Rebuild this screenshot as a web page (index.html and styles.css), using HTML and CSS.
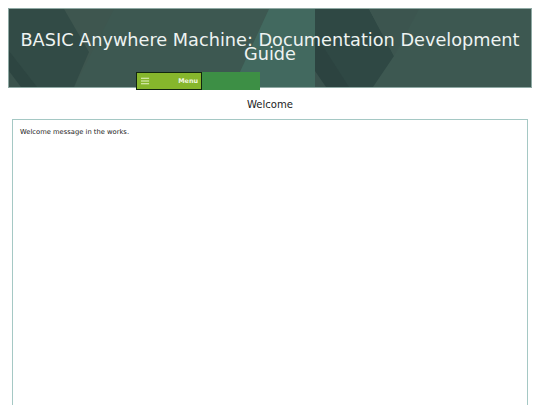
FILE: index.html
```html
<!DOCTYPE html>
<html lang="en">
<head>
  <meta charset="UTF-8">
  <title>BASIC Anywhere Machine: Documentation Development Guide</title>
  <link rel="stylesheet" href="styles.css">
</head>
<body>
  <!-- Banner -->
  <header class="banner">
    <svg class="banner-bg" viewBox="0 0 522 78" preserveAspectRatio="none" aria-hidden="true">
      <rect width="522" height="78" fill="#3d5851"/>
      <polygon points="0,0 105,0 65,78 0,78" fill="#3e564f"/>
      <polygon points="0,0 55,0 80,43 65,78 0,78" fill="#324b46"/>
      <polygon points="0,42 28,78 0,78" fill="#2d4541"/>
      <polygon points="0,62 12,78 0,78" fill="#3a524c"/>
      <polygon points="224,78 260,0 306,0 306,78" fill="#42695f"/>
      <polygon points="306,0 360,0 385,47 364,78 306,78" fill="#2f4844"/>
      <polygon points="360,0 410,0 385,47" fill="#3c554f"/>
      <polygon points="306,25 340,78 306,78" fill="#2c4340"/>
      <polygon points="306,62 317,78 306,78" fill="#3a524d"/>
    </svg>
    <h1 class="title">BASIC Anywhere Machine: Documentation Development Guide</h1>
    <nav class="menu-bar">
      <div class="menu-btn">
        <svg class="burger" viewBox="0 0 10 8" aria-hidden="true">
          <path d="M0 1H9M0 4H9M0 7H9" stroke="#e6f2c4" stroke-width="1.2"/>
        </svg>
        <span>Menu</span>
      </div>
    </nav>
  </header>

  <!-- Main content -->
  <h2 class="page-title">Welcome</h2>
  <main class="panel">
    <p>Welcome message in the works.</p>
  </main>
</body>
</html>
```
FILE: styles.css
```css
/* General styles */
html, body {
  height: 405px;
  overflow: hidden;
}

body {
  margin: 0;
  padding: 8px 8px 0;
  box-sizing: border-box;
  font-family: "DejaVu Sans", sans-serif;
  background-color: #fff;
  color: #222;
}

/* Banner */
.banner {
  position: relative;
  height: 80px;
  box-sizing: border-box;
  border: 1px solid #8fa9a4;
  padding-top: 24px;
}

.banner-bg {
  position: absolute;
  top: 0;
  left: 0;
  width: 100%;
  height: 100%;
}

.title {
  position: relative;
  margin: 0;
  font-size: 17.7px;
  font-weight: normal;
  line-height: 14.4px;
  text-align: center;
  color: #eef3f1;
}

.menu-bar {
  position: absolute;
  left: 127px;
  top: 63px;
  width: 124px;
  height: 18px;
  background-color: #3d8f45;
}

.menu-btn {
  display: flex;
  align-items: center;
  justify-content: space-between;
  box-sizing: border-box;
  width: 66px;
  height: 18px;
  padding: 0 3px 0 4px;
  background-color: #86b62c;
  border: 1px solid #12260f;
  color: #f2f7e2;
  font-size: 6.4px;
  font-weight: bold;
}

.burger {
  width: 9px;
  height: 8px;
}

/* Main content */
.page-title {
  margin: 9px 0 0;
  font-size: 10.1px;
  font-weight: normal;
  line-height: 15px;
  text-align: center;
}

.panel {
  box-sizing: border-box;
  height: 286px;
  margin: 7px 4px 0;
  padding: 7px;
  border: 1px solid #a5c8c4;
  border-bottom: none;
}

.panel p {
  margin: 0;
  font-size: 6.75px;
  line-height: 10px;
}
```
